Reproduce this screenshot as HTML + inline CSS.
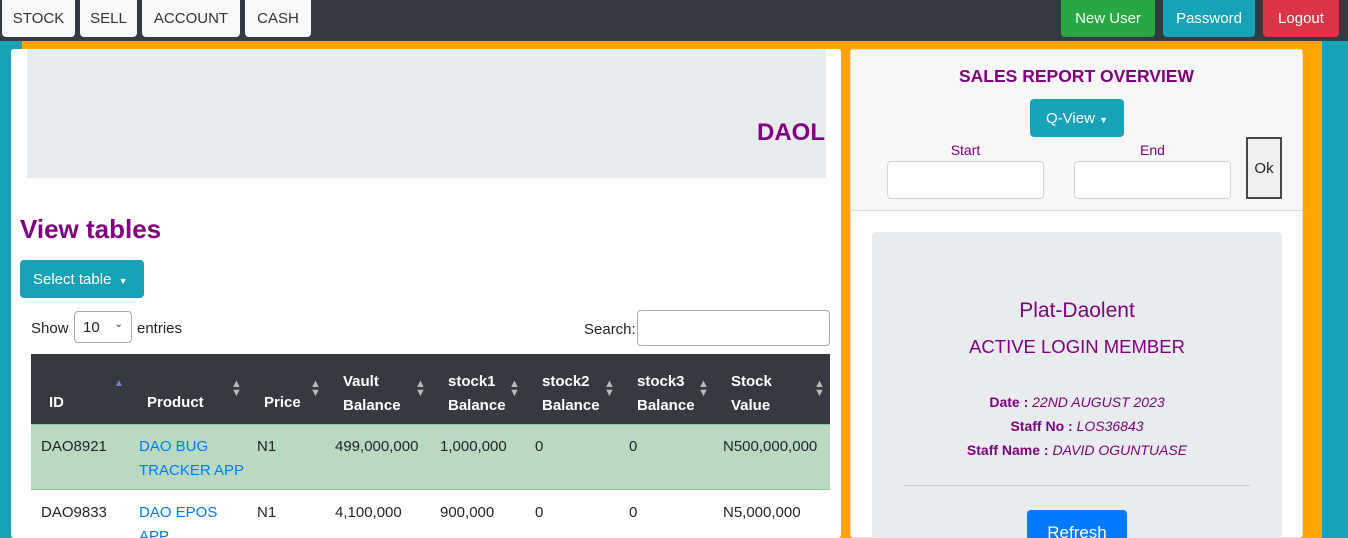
<!DOCTYPE html>
<html style="overflow:hidden;width:1348px;height:538px"><head><style>
*{box-sizing:border-box;margin:0;padding:0}
body{width:1348px;height:538px;overflow:hidden;background:#17a2b8;font-family:"Liberation Sans",sans-serif;font-size:15px;color:#212529;position:relative}
.a{position:absolute}
.nav{left:0;top:0;width:1348px;height:41px;background:#343a40}
.nb{top:0;height:37px;background:#f8f9fa;border-radius:0 0 4px 4px;color:#333;font-size:15px;line-height:38px;text-align:center}
.rb{top:0;height:37px;border-radius:0 0 4px 4px;color:#fff;font-size:15px;line-height:38px;text-align:center}
.p{color:#800080}
</style></head><body>
<div class="a nav"></div>
<div class="a nb" style="left:2px;width:73px">STOCK</div>
<div class="a nb" style="left:80px;width:57px">SELL</div>
<div class="a nb" style="left:142px;width:98px">ACCOUNT</div>
<div class="a nb" style="left:245px;width:66px">CASH</div>
<div class="a rb" style="left:1061px;width:94px;background:#28a745">New User</div>
<div class="a rb" style="left:1163px;width:92px;background:#17a2b8">Password</div>
<div class="a rb" style="left:1263px;width:76px;background:#dc3545">Logout</div>

<div class="a" style="left:22px;top:41px;width:1300px;height:497px;background:#ffa500"></div>
<div class="a" style="left:11px;top:49px;width:830px;height:489px;background:#fff;border-radius:3px"></div>
<div class="a" style="left:27px;top:49px;width:799px;height:129px;background:#e9ecef;overflow:hidden">
<div class="a p" style="left:730px;top:70px;font-size:24px;font-weight:bold">DAOLENT</div></div>
<div class="a p" style="left:20px;top:214px;font-size:26px;font-weight:bold">View tables</div>
<div class="a" style="left:20px;top:260px;width:124px;height:38px;background:#17a2b8;border-radius:4px;color:#fff;line-height:40px;padding-left:13px">Select table <span style="font-size:9px;margin-left:3px">▼</span></div>
<div class="a" style="left:31px;top:320px">Show</div>
<div class="a" style="left:74px;top:311px;width:58px;height:32px;border:1px solid #aaa;border-radius:4px;padding:7px 8px;font-size:15px">10 <span style="float:right;font-size:10px">⌄</span></div>
<div class="a" style="left:137px;top:320px">entries</div>
<div class="a" style="left:584px;top:321px">Search:</div>
<div class="a" style="left:637px;top:310px;width:193px;height:36px;border:1px solid #aaa;border-radius:4px"></div>

<div class="a" style="left:31px;top:354px;width:799px;height:70px;background:#343a40"></div>
<div class="a" style="left:31px;top:424px;width:799px;height:66px;background:#b9d9c1;border-top:1px solid #8fc79a;border-bottom:1px solid #8fc79a"></div>
<div style="color:#fff;font-weight:bold">
<div class="a" style="left:49px;top:394px">ID</div>
<div class="a" style="left:114px;top:378px;font-size:10px;color:#8080d0">▲</div>
<div class="a" style="left:147px;top:394px">Product</div>
<div class="a" style="left:264px;top:394px">Price</div>
<div class="a" style="left:343px;top:370px;line-height:24px">Vault<br>Balance</div>
<div class="a" style="left:448px;top:370px;line-height:24px">stock1<br>Balance</div>
<div class="a" style="left:542px;top:370px;line-height:24px">stock2<br>Balance</div>
<div class="a" style="left:637px;top:370px;line-height:24px">stock3<br>Balance</div>
<div class="a" style="left:731px;top:370px;line-height:24px">Stock<br>Value</div>
</div>
<div style="color:#bbb;font-size:11px;line-height:9px">
<div class="a" style="left:231px;top:380px">▲<br>▼</div>
<div class="a" style="left:310px;top:380px">▲<br>▼</div>
<div class="a" style="left:415px;top:380px">▲<br>▼</div>
<div class="a" style="left:509px;top:380px">▲<br>▼</div>
<div class="a" style="left:604px;top:380px">▲<br>▼</div>
<div class="a" style="left:698px;top:380px">▲<br>▼</div>
<div class="a" style="left:814px;top:380px">▲<br>▼</div>
</div>
<div style="line-height:24px">
<div class="a" style="left:41px;top:435px">DAO8921</div>
<div class="a" style="left:139px;top:435px;color:#007bff">DAO BUG<br>TRACKER APP</div>
<div class="a" style="left:257px;top:435px">N1</div>
<div class="a" style="left:335px;top:435px">499,000,000</div>
<div class="a" style="left:440px;top:435px">1,000,000</div>
<div class="a" style="left:535px;top:435px">0</div>
<div class="a" style="left:629px;top:435px">0</div>
<div class="a" style="left:723px;top:435px">N500,000,000</div>
<div class="a" style="left:41px;top:501px">DAO9833</div>
<div class="a" style="left:139px;top:501px;color:#007bff">DAO EPOS</div>
<div class="a" style="left:139px;top:525px;color:#007bff;height:13px;overflow:hidden">APP</div>
<div class="a" style="left:257px;top:501px">N1</div>
<div class="a" style="left:335px;top:501px">4,100,000</div>
<div class="a" style="left:440px;top:501px">900,000</div>
<div class="a" style="left:535px;top:501px">0</div>
<div class="a" style="left:629px;top:501px">0</div>
<div class="a" style="left:723px;top:501px">N5,000,000</div>
</div>

<div class="a" style="left:850px;top:49px;width:453px;height:489px;background:#fff;border:1px solid #ddd;border-radius:3px"></div>
<div class="a" style="left:851px;top:50px;width:451px;height:161px;background:#f7f7f7;border-bottom:1px solid #ddd"></div>
<div class="a p" style="left:851px;top:66px;width:451px;text-align:center;font-size:17.5px;font-weight:bold">SALES REPORT OVERVIEW</div>
<div class="a" style="left:1030px;top:99px;width:94px;height:38px;background:#17a2b8;border-radius:4px;color:#fff;line-height:39px;text-align:center">Q-View <span style="font-size:9px">▼</span></div>
<div class="a p" style="left:887px;top:142px;width:157px;text-align:center;font-size:14px">Start</div>
<div class="a p" style="left:1074px;top:142px;width:157px;text-align:center;font-size:14px">End</div>
<div class="a" style="left:887px;top:161px;width:157px;height:38px;background:#fff;border:1px solid #ced4da;border-radius:4px"></div>
<div class="a" style="left:1074px;top:161px;width:157px;height:38px;background:#fff;border:1px solid #ced4da;border-radius:4px"></div>
<div class="a" style="left:1246px;top:137px;width:36px;height:62px;background:#efefef;border:2px solid #444;line-height:60px;text-align:center;font-size:15px">Ok</div>
<div class="a" style="left:872px;top:232px;width:410px;height:306px;background:#e9ecef;border-radius:4px;overflow:hidden">
<div class="a p" style="left:0;top:67px;width:410px;text-align:center;font-size:21px">Plat-Daolent</div>
<div class="a p" style="left:0;top:104px;width:410px;text-align:center;font-size:18.5px">ACTIVE LOGIN MEMBER</div>
<div class="a p" style="left:0;top:158px;width:410px;text-align:center;font-size:14px;line-height:24px"><b>Date :</b> <i>22ND AUGUST 2023</i><br><b>Staff No :</b> <i>LOS36843</i><br><b>Staff Name :</b> <i>DAVID OGUNTUASE</i></div>
<div class="a" style="left:32px;top:253px;width:346px;height:1px;background:#ccc"></div>
<div class="a" style="left:155px;top:278px;width:100px;height:40px;background:#007bff;border-radius:4px;color:#fff;text-align:center;line-height:46px;font-size:17px">Refresh</div>
</div>
</body></html>
